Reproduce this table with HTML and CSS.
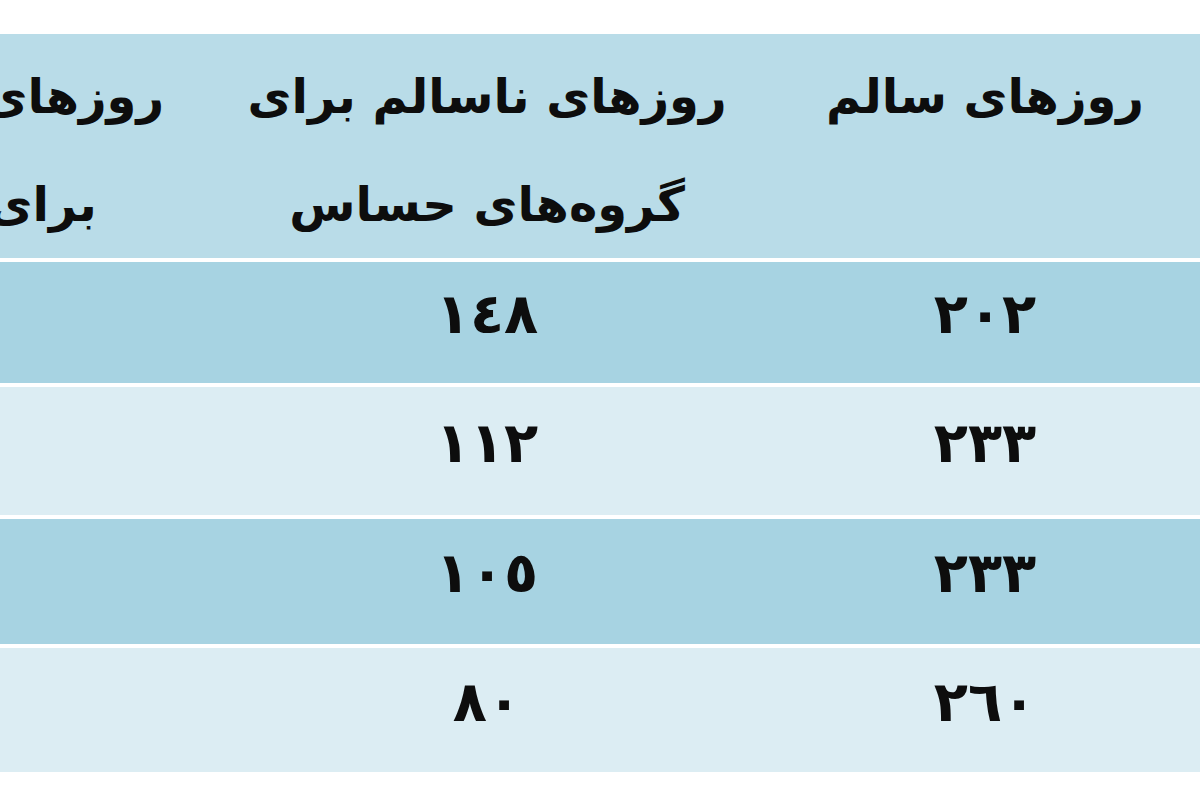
FILE: index.html
```html
<!DOCTYPE html>
<html lang="fa" dir="rtl">
<head>
<meta charset="utf-8">
<title>جدول روزها</title>
<link rel="stylesheet" href="styles.css">
</head>
<body>
<div class="wrap">
  <table class="tbl">
    <colgroup>
      <col class="c1"><col class="c2"><col class="c3">
    </colgroup>
    <thead>
      <tr class="head">
        <th><span class="ln">روزهای سالم</span></th>
        <th><span class="ln">روزهای ناسالم برای</span><span class="ln">گروه‌های حساس</span></th>
        <th><span class="ln">روزهای ناسالم</span><span class="ln">برای همه</span></th>
      </tr>
    </thead>
    <tbody>
      <tr class="dark r1"><td>٢٠٢</td><td>١٤٨</td><td></td></tr>
      <tr class="light r2"><td>٢٣٣</td><td>١١٢</td><td></td></tr>
      <tr class="dark r3"><td>٢٣٣</td><td>١٠٥</td><td></td></tr>
      <tr class="light r4"><td>٢٦٠</td><td>٨٠</td><td></td></tr>
    </tbody>
  </table>
</div>
</body>
</html>
```
FILE: styles.css
```css
html, body {
  margin: 0;
  padding: 0;
  background: #ffffff;
}
body {
  font-family: "DejaVu Sans", "Liberation Sans", sans-serif;
  color: #0d0d0d;
}
.wrap {
  width: 1200px;
  height: 800px;
  overflow: hidden;
  direction: rtl;
  padding-top: 34px;
  box-sizing: border-box;
}
.tbl {
  width: 1430px;
  border-collapse: separate;
  border-spacing: 0;
  table-layout: fixed;
}
.c1 { width: 430px; }
.c2 { width: 566px; }
.c3 { width: 434px; }
.head th {
  background: #b9dce8;
  height: 226px;
  box-sizing: border-box;
  vertical-align: top;
  padding: 8px 0 0 0;
  font-weight: bold;
  font-size: 48px;
  text-align: center;
  border-bottom: 4px solid #ffffff;
  white-space: nowrap;
}
.ln {
  display: block;
  line-height: 108px;
}
.tbl td {
  box-sizing: border-box;
  text-align: center;
  vertical-align: middle;
  font-size: 56px;
  font-weight: bold;
  border-bottom: 4px solid #ffffff;
  padding: 0 0 18px 0;
}
.r1 td { height: 125px; }
.r2 td { height: 132px; }
.r3 td { height: 129px; }
.r4 td { height: 124px; border-bottom: 0; }
.dark td { background: #a7d3e2; }
.light td { background: #dcedf3; }
```
